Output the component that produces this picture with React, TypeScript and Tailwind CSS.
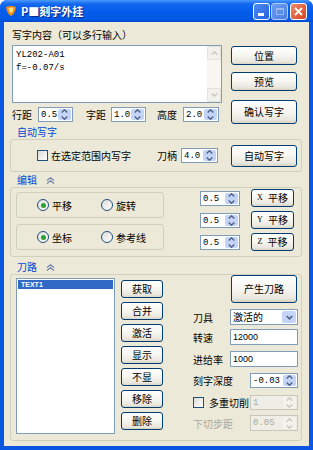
import React from 'react'

type Kids = { children?: React.ReactNode; className?: string }

function Btn({ children, className = '' }: Kids) {
  return (
    <div
      className={`flex items-center justify-center rounded-[3px] border border-[#003C74] bg-[linear-gradient(to_bottom,#ffffff_0%,#f6f5f0_50%,#e9e7de_85%,#d8d4c4_100%)] text-[10px] leading-none text-black ${className}`}
    >
      {children}
    </div>
  )
}

function Arrows({ disabled }: { disabled?: boolean }) {
  const c = disabled ? '#C9C7BA' : '#4D6185'
  return (
    <div
      className={`flex w-[13px] flex-col gap-px rounded-[2px] ${disabled ? 'bg-[#F3F2EC]' : 'bg-[#C4D4F7]'}`}
    >
      <div className="flex flex-1 items-end justify-center pb-px">
        <svg width="7" height="4" viewBox="0 0 7 4">
          <path d="M0.7 3.4 L3.5 0.8 L6.3 3.4" stroke={c} strokeWidth="1.4" fill="none" />
        </svg>
      </div>
      <div className="flex flex-1 items-start justify-center pt-px">
        <svg width="7" height="4" viewBox="0 0 7 4">
          <path d="M0.7 0.6 L3.5 3.2 L6.3 0.6" stroke={c} strokeWidth="1.4" fill="none" />
        </svg>
      </div>
    </div>
  )
}

function Spin({ value, className = '', disabled }: { value: string; className?: string; disabled?: boolean }) {
  return (
    <div
      className={`flex border p-px ${disabled ? 'border-[#C9C7BA] bg-[#EFEEE6] text-[#ACA899]' : 'border-[#7F9DB9] bg-white text-black'} ${className}`}
    >
      <div className="flex-1 pl-px font-['Liberation_Mono',monospace] text-[9px] leading-[12px]">{value}</div>
      <Arrows disabled={disabled} />
    </div>
  )
}

function Check() {
  return (
    <div className="h-[11px] w-[11px] shrink-0 border border-[#1C5180] bg-[linear-gradient(135deg,#DCDCD7,#FFFFFF)]" />
  )
}

function Radio({ checked, label, className = '' }: { checked?: boolean; label: string; className?: string }) {
  return (
    <div className={`flex items-center ${className}`}>
      <div className="flex h-[12px] w-[12px] items-center justify-center rounded-full border border-[#1C5180] bg-[linear-gradient(135deg,#DCDCD7,#FFFFFF)]">
        {checked && <div className="h-[5px] w-[5px] rounded-full bg-[#2BA22B]" />}
      </div>
      <span className="ml-[3px]">{label}</span>
    </div>
  )
}

function Chevrons() {
  return (
    <svg width="9" height="7" viewBox="0 0 9 7" className="ml-[9px]">
      <path d="M1 3.5 L4.5 0.8 L8 3.5 M1 6.5 L4.5 3.8 L8 6.5" stroke="#6B7FA8" strokeWidth="1.1" fill="none" />
    </svg>
  )
}

function Field({ value }: { value: string }) {
  return (
    <div className="h-[16px] w-[68px] border border-[#7F9DB9] bg-white pl-[2px] font-['Liberation_Sans',sans-serif] text-[9px] leading-[14px]">
      {value}
    </div>
  )
}

export default function App() {
  return (
    <div className="flex h-[450px] w-[313px] flex-col overflow-hidden rounded-t-[7px] bg-[#0A57E3] font-['Noto_Sans_CJK_SC','Noto_Sans',sans-serif] text-[10px] text-black">
      {/* title bar */}
      <div className="flex h-[22px] items-center bg-[linear-gradient(to_bottom,#4A9BFF_0%,#1467EE_18%,#005CEB_55%,#045AE6_85%,#004AD0_100%)] pl-[5px] pr-[6px]">
        <svg width="12" height="12" viewBox="0 0 12 12">
          <path d="M1 2 Q6 0 11 2 Q10 9 6 11 Q2 9 1 2 Z" fill="#F08A1C" />
          <path d="M3.5 3 Q6 2 8.5 3 Q8 7 6 8.5 Q4 7 3.5 3 Z" fill="#FFE27A" />
        </svg>
        <span className="ml-[4px] text-[11px] font-bold leading-none text-white [text-shadow:1px_1px_0_#0A2A8A]">
          P■刻字外挂
        </span>
        <div className="flex-1" />
        <div className="flex h-[17px] w-[17px] items-end rounded-[3px] border border-white bg-[linear-gradient(135deg,#4E8CF5,#2460E0)] pb-[3px] pl-[4px]">
          <div className="h-[3px] w-[6px] bg-white" />
        </div>
        <div className="ml-px flex h-[17px] w-[17px] items-center justify-center rounded-[3px] border border-[#B6CCF6] bg-[linear-gradient(135deg,#6C9CF0,#4A7FE6)]">
          <div className="h-[7px] w-[8px] border border-t-2 border-[#9DB9EE]" />
        </div>
        <div className="ml-[2px] flex h-[17px] w-[17px] items-center justify-center rounded-[3px] border border-white bg-[linear-gradient(135deg,#EE8A6A,#D6451F)]">
          <svg width="9" height="9" viewBox="0 0 9 9">
            <path d="M1 1 L8 8 M8 1 L1 8" stroke="white" strokeWidth="1.8" />
          </svg>
        </div>
      </div>

      {/* client area */}
      <div className="mx-[4px] mb-[4px] flex flex-1 flex-col bg-[#ECE9D8] pl-[6px] pr-[7px]">
        <div className="ml-[2px] flex">
          <div className="flex w-[210px] flex-col">
            <div className="mt-[6px] h-[14px] leading-[14px]">写字内容（可以多行输入）</div>
            <div className="mt-[3px] flex h-[58px] border border-[#7F9DB9] bg-white">
              <div className="flex-1 pl-[3px] pt-[3px] font-['Liberation_Mono',monospace] text-[9px] leading-[13px]">
                <div>YL202-A01</div>
                <div>f=-0.07/s</div>
              </div>
              <div className="flex w-[14px] flex-col justify-between bg-[#F7F6F2]">
                <div className="flex h-[14px] items-center justify-center rounded-[2px] border border-[#E4E2DA] bg-[#F2F1EC]">
                  <svg width="7" height="4" viewBox="0 0 7 4">
                    <path d="M0.7 3.4 L3.5 0.8 L6.3 3.4" stroke="#C9C7BA" strokeWidth="1.4" fill="none" />
                  </svg>
                </div>
                <div className="flex h-[14px] items-center justify-center rounded-[2px] border border-[#E4E2DA] bg-[#F2F1EC]">
                  <svg width="7" height="4" viewBox="0 0 7 4">
                    <path d="M0.7 0.6 L3.5 3.2 L6.3 0.6" stroke="#C9C7BA" strokeWidth="1.4" fill="none" />
                  </svg>
                </div>
              </div>
            </div>
            <div className="mt-[4px] flex h-[15px] items-center">
              <span className="w-[26px]">行距</span>
              <Spin value="0.5" className="h-[15px] w-[35px]" />
              <span className="ml-[13px] w-[25px]">字距</span>
              <Spin value="1.0" className="h-[15px] w-[35px]" />
              <span className="ml-[11px] w-[26px]">高度</span>
              <Spin value="2.0" className="h-[15px] w-[36px]" />
            </div>
          </div>
          <div className="ml-[9px] mt-[24px] flex w-[66px] flex-col">
            <Btn className="h-[19px]">位置</Btn>
            <Btn className="mt-[7px] h-[19px]">预览</Btn>
            <Btn className="mt-[9px] h-[24px]">确认写字</Btn>
          </div>
        </div>

        {/* 自动写字 */}
        <div className="mt-[1px] h-[14px] pl-[7px] leading-[14px] text-[#0046D5]">自动写字</div>
        <div className="flex h-[33px] items-center rounded-[3px] border border-[#D0D0BF]">
          <div className="ml-[26px] flex w-[120px] items-center">
            <Check />
            <span className="ml-[3px]">在选定范围内写字</span>
          </div>
          <span className="w-[24px]">刀柄</span>
          <Spin value="4.0" className="h-[15px] w-[37px]" />
          <Btn className="ml-[13px] h-[22px] w-[66px]">自动写字</Btn>
        </div>

        {/* 编辑 */}
        <div className="mt-[1px] flex h-[14px] items-center pl-[7px] leading-[14px] text-[#0046D5]">
          编辑
          <Chevrons />
        </div>
        <div className="flex h-[70px] items-start rounded-[3px] border border-[#D0D0BF]">
          <div className="ml-[5px] mt-[4px] flex flex-col gap-[6px]">
            <div className="flex h-[26px] w-[148px] items-center rounded-[3px] border border-[#D0D0BF] pl-[20px]">
              <Radio checked label="平移" className="w-[64px]" />
              <Radio label="旋转" />
            </div>
            <div className="flex h-[26px] w-[148px] items-center rounded-[3px] border border-[#D0D0BF] pl-[20px]">
              <Radio checked label="坐标" className="w-[64px]" />
              <Radio label="参考线" />
            </div>
          </div>
          <div className="ml-[36px] mt-px flex flex-col gap-[4px]">
            {['X', 'Y', 'Z'].map((a) => (
              <div key={a} className="flex h-[18px] items-center">
                <Spin value="0.5" className="h-[15px] w-[40px]" />
                <Btn className="ml-[11px] h-[18px] w-[43px]">
                  <span className="mr-[5px] font-['Liberation_Serif',serif] text-[8px]">{a}</span>平移
                </Btn>
              </div>
            ))}
          </div>
        </div>

        {/* 刀路 */}
        <div className="mt-[3px] flex h-[14px] items-center pl-[7px] leading-[14px] text-[#0046D5]">
          刀路
          <Chevrons />
        </div>
        <div className="mb-[5px] flex flex-1 items-start rounded-[3px] border border-[#D0D0BF]">
          <div className="ml-[5px] mt-[3px] h-[156px] w-[99px] border border-[#7F9DB9] bg-white p-px">
            <div className="h-[9px] bg-[#316AC5] pl-[3px] font-['Liberation_Sans',sans-serif] text-[7px] font-bold leading-[9px] text-white">
              TEXT1
            </div>
          </div>
          <div className="ml-[6px] mt-[5px] flex w-[42px] flex-col gap-[4px]">
            {['获取', '合并', '激活', '显示', '不显', '移除', '删除'].map((t) => (
              <Btn key={t} className="h-[18px]">
                {t}
              </Btn>
            ))}
          </div>
          <div className="ml-[30px] flex w-[105px] flex-col">
            <Btn className="ml-[38px] h-[28px] w-[66px]">产生刀路</Btn>
            <div className="mt-[6px] flex h-[16px] items-center">
              <span className="w-[37px]">刀具</span>
              <div className="flex h-[16px] w-[68px] border border-[#7F9DB9] bg-white p-px">
                <span className="flex-1 pl-px leading-[12px]">激活的</span>
                <div className="flex w-[14px] items-center justify-center rounded-[2px] bg-[#C4D4F7]">
                  <svg width="7" height="5" viewBox="0 0 7 5">
                    <path d="M0.7 1 L3.5 3.8 L6.3 1" stroke="#4D6185" strokeWidth="1.6" fill="none" />
                  </svg>
                </div>
              </div>
            </div>
            <div className="mt-[4px] flex h-[16px] items-center">
              <span className="w-[37px]">转速</span>
              <Field value="12000" />
            </div>
            <div className="mt-[6px] flex h-[16px] items-center">
              <span className="w-[37px]">进给率</span>
              <Field value="1000" />
            </div>
            <div className="mt-[5px] flex h-[16px] items-center">
              <span className="w-[57px]">刻字深度</span>
              <Spin value="-0.03" className="h-[15px] w-[48px]" />
            </div>
            <div className="mt-[6px] flex h-[16px] items-center">
              <div className="flex w-[57px] items-center">
                <Check />
                <span className="ml-[5px]">多重切削</span>
              </div>
              <Spin value="1" disabled className="h-[15px] w-[48px]" />
            </div>
            <div className="mt-[5px] flex h-[16px] items-center">
              <span className="w-[57px] text-[#ACA899]">下切步距</span>
              <Spin value="0.05" disabled className="h-[16px] w-[48px]" />
            </div>
          </div>
        </div>
      </div>
    </div>
  )
}
